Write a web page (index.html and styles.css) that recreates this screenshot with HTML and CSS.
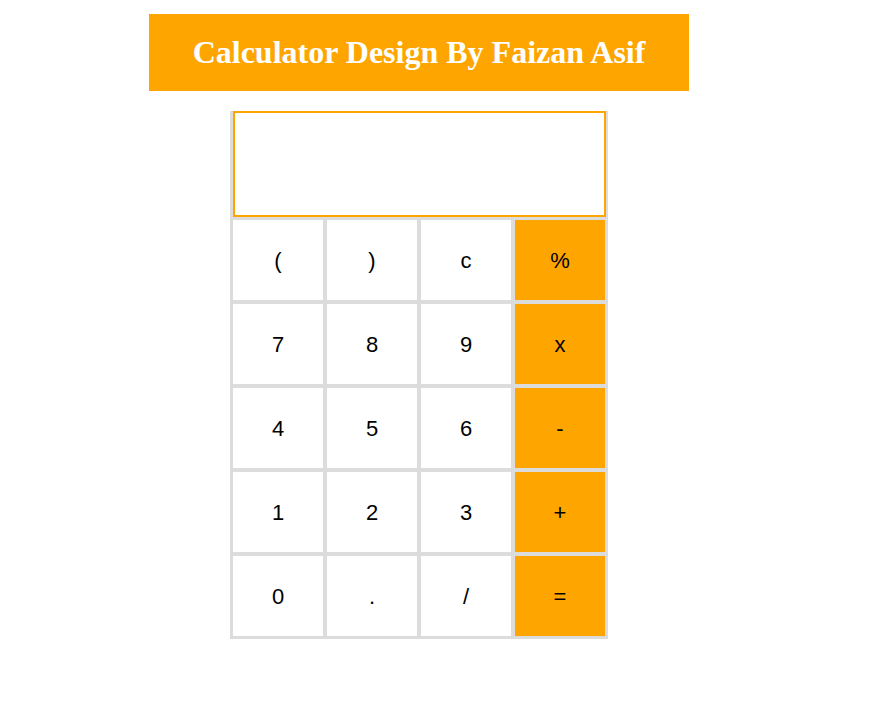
FILE: index.html
```html
<!DOCTYPE html>
<html>
<head>
<meta charset="utf-8">
<title>Calculator</title>
<link rel="stylesheet" href="styles.css">
</head>
<body>
<div class="page">
  <h1 class="title">Calculator Design By Faizan Asif</h1>
  <div class="calc">
    <input class="display" type="text">
    <button class="key">(</button>
    <button class="key">)</button>
    <button class="key">c</button>
    <button class="key op">%</button>
    <button class="key">7</button>
    <button class="key">8</button>
    <button class="key">9</button>
    <button class="key op">x</button>
    <button class="key">4</button>
    <button class="key">5</button>
    <button class="key">6</button>
    <button class="key op">-</button>
    <button class="key">1</button>
    <button class="key">2</button>
    <button class="key">3</button>
    <button class="key op">+</button>
    <button class="key">0</button>
    <button class="key">.</button>
    <button class="key">/</button>
    <button class="key op">=</button>
  </div>
</div>
</body>
</html>
```

FILE: styles.css
```css
html, body {
  margin: 0;
  padding: 0;
  background: #ffffff;
}

.page {
  width: 838px;
  display: flex;
  flex-direction: column;
  align-items: center;
}

.title {
  margin: 14px 0 20px;
  width: 540px;
  height: 77px;
  line-height: 77px;
  background: #ffa500;
  color: #ffffff;
  font-family: "Liberation Serif", "Times New Roman", serif;
  font-weight: bold;
  font-size: 32px;
  text-align: center;
}

.calc {
  display: grid;
  grid-template-columns: repeat(4, 90px);
  grid-template-rows: 105px repeat(5, 80px);
  gap: 4px;
  padding: 0 3px 3px 3px;
  background: #dcdcdc;
}

.display {
  grid-column: 1 / span 4;
  align-self: start;
  box-sizing: border-box;
  width: 373px;
  height: 106px;
  margin: 0 -1px 0 0;
  border: 2px solid #ffa500;
  background: #ffffff;
  outline: none;
  padding: 0;
}

.key {
  border: none;
  margin: 0;
  padding: 2px 0 0 0;
  background: #ffffff;
  color: #000000;
  font-family: "Liberation Sans", Arial, sans-serif;
  font-size: 22px;
}

.key.op {
  background: #ffa500;
}
```
